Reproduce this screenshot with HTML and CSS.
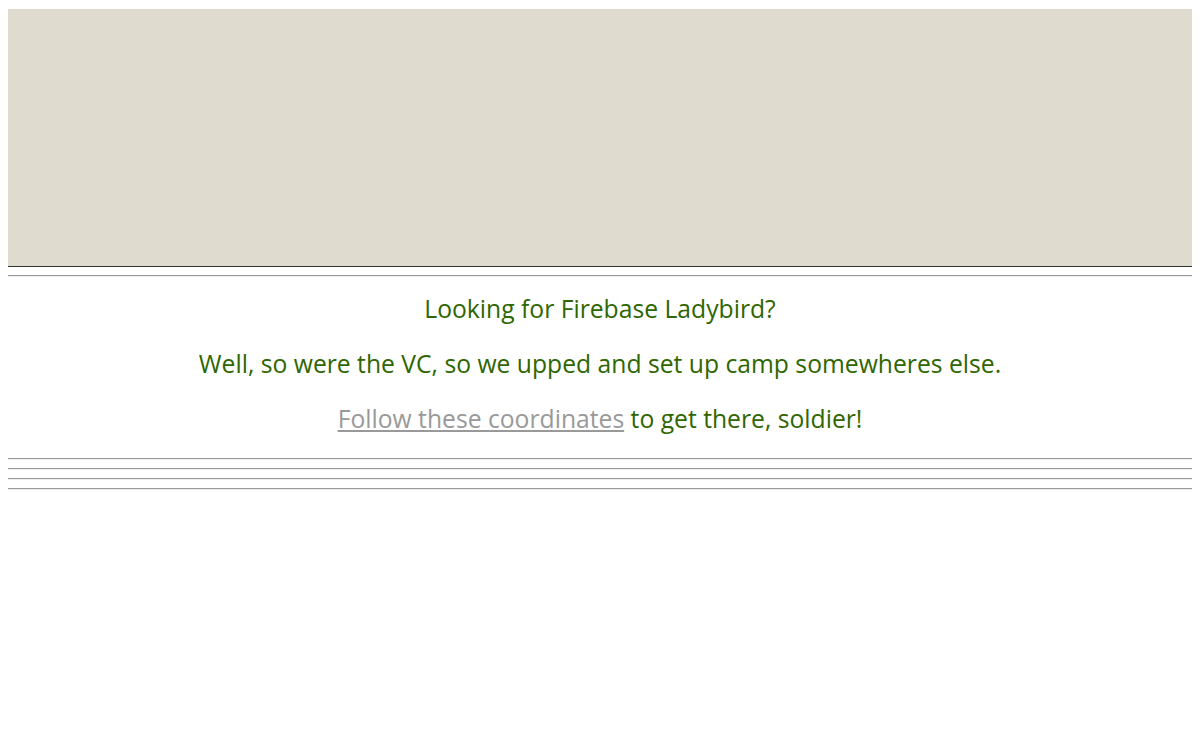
FILE: index.html
```html
<!DOCTYPE html>
<html>
<head>
<meta charset="utf-8">
<title>Firebase Ladybird</title>
<link rel="stylesheet" href="styles.css">
</head>
<body>
<div class="page">
  <div class="banner"></div>
  <hr>
  <div class="message">
    <p>Looking for Firebase Ladybird?</p>
    <p>Well, so were the VC, so we upped and set up camp somewheres else.</p>
    <p><a href="#">Follow these coordinates</a> to get there, soldier!</p>
  </div>
  <hr>
  <hr>
  <hr>
  <hr>
</div>
</body>
</html>
```

FILE: styles.css
```css
body {
  margin: 8px;
  background: #ffffff;
}

.page {
  padding-top: 1px;
}

.banner {
  height: 257px;
  background: #dfdbcf;
  border-bottom: 1px solid #333333;
}

hr {
  margin: 8px 0;
  height: 0;
  border: 0;
  border-top: 1px solid #9a9a9a;
  border-bottom: 1px solid #eeeeee;
}

.message {
  display: flex;
  flex-direction: column;
  align-items: center;
  gap: 23px;
  padding: 8px 0 15px;
  font-family: "Open Sans", "Noto Sans", sans-serif;
  font-size: 24.7px;
  line-height: 32px;
  color: #2f6600;
  text-align: center;
}

.message p {
  margin: 0;
}

.message a {
  color: #999999;
  text-decoration: underline;
}
```
